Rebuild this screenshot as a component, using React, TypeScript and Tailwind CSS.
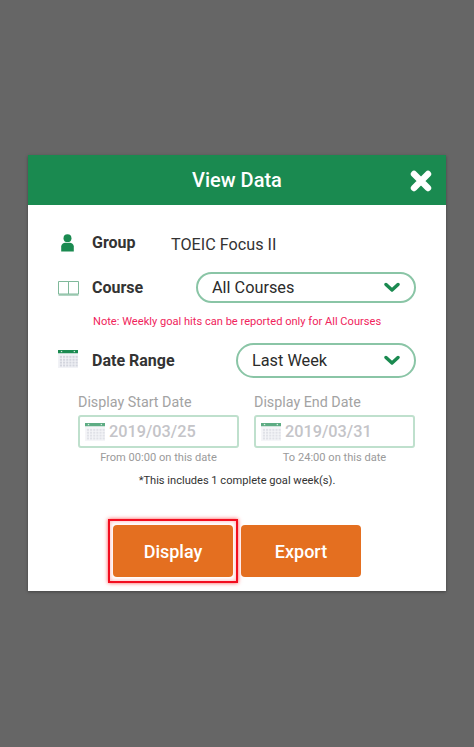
function CalendarIcon({ className }: { className: string }) {
  const cells = [];
  for (let r = 0; r < 4; r++) {
    for (let c = 0; c < 6; c++) {
      cells.push(<rect key={`${r}-${c}`} x={2 + c * 3.3} y={6.5 + r * 3.2} width="2.2" height="2.2" fill="#d3d5de" />);
    }
  }
  return (
    <svg viewBox="0 0 21 20" preserveAspectRatio="none" className={className}>
      <rect x="0" y="3" width="21" height="17" fill="#f1f2f6" />
      <rect x="0" y="0" width="21" height="3.6" fill="#1a8a50" />
      <rect x="3" y="1" width="1.4" height="1.4" fill="#cfe8da" />
      <rect x="16.5" y="1" width="1.4" height="1.4" fill="#cfe8da" />
      {cells}
    </svg>
  );
}

function Chevron() {
  return (
    <svg viewBox="0 0 16 11" className="h-[11px] w-[16px]">
      <path d="M2 2.5 L8 8 L14 2.5" fill="none" stroke="#1a8a50" strokeWidth="3.4" strokeLinecap="round" strokeLinejoin="round" />
    </svg>
  );
}

function Select({ label, className }: { label: string; className: string }) {
  return (
    <div className={`flex items-center justify-between rounded-full border-2 border-[#8ac5a6] bg-white pl-[14px] pr-[14px] text-[16.3px] text-[#2b2b2b] ${className}`}>
      <span className="pt-[2px]">{label}</span>
      <Chevron />
    </div>
  );
}

function DateField({ label, value, hint }: { label: string; value: string; hint: string }) {
  return (
    <div className="w-[161px]">
      <div className="text-[14.3px] leading-[20px] text-[#a3a3a3]">{label}</div>
      <div className="mt-[3px] flex h-[33px] items-center rounded-[3px] border-2 border-[#bfe0cd] pl-[5px]">
        <CalendarIcon className="h-[18px] w-[20px] opacity-70" />
        <span className="ml-[4px] pt-[2px] text-[16.3px] font-medium text-[#c4c4c8]">{value}</span>
      </div>
      <div className="mt-[2px] text-center text-[11.1px] leading-[16px] text-[#9a9a9a]">{hint}</div>
    </div>
  );
}

export default function App() {
  return (
    <div className="h-[747px] bg-[#666666] pt-[155px] font-['Roboto',sans-serif]">
      <div className="mx-auto h-[436px] w-[418px] bg-white shadow-[0_1px_3px_rgba(0,0,0,0.35)]">
        <div className="relative flex h-[50px] items-center justify-center bg-[#1a8a50]">
          <span className="text-[20px] font-medium text-white">View Data</span>
          <svg viewBox="0 0 22 22" className="absolute right-[14px] top-[15px] h-[22px] w-[22px]">
            <path d="M4 4 L18 18 M18 4 L4 18" stroke="#ffffff" strokeWidth="6.4" strokeLinecap="round" />
          </svg>
        </div>

        <div className="flow-root px-[30px]">
          <div className="mt-[27px] flex h-[24px] items-center">
            <svg viewBox="0 0 16 20" className="ml-[2px] mb-[3px] h-[18px] w-[15px]">
              <circle cx="8" cy="4.6" r="4.4" fill="#1a8a50" />
              <path d="M1 19.5 V14 C1 11 3.5 9.6 5.5 9.6 H10.5 C12.5 9.6 15 11 15 14 V19.5 Z" fill="#1a8a50" />
            </svg>
            <span className="ml-[17px] w-[79px] pb-[2px] text-[16px] font-bold text-[#333333]">Group</span>
            <span className="pt-[2px] text-[16.2px] text-[#333333]">TOEIC Focus II</span>
          </div>

          <div className="mt-[16px] flex h-[31px] items-center">
            <svg viewBox="0 0 21 16" fill="none" className="h-[16px] w-[21px]">
              <path d="M.5 1.5 H10.5 V14 H.5 Z M10.5 1.5 H20.5 V14 H10.5 Z" stroke="#7fb99a" strokeWidth="1" />
              <path d="M.5 15 H20.5" stroke="#7fb99a" strokeWidth="1.2" />
            </svg>
            <span className="ml-[13px] text-[16px] font-bold text-[#333333]">Course</span>
            <Select label="All Courses" className="ml-auto h-[31px] w-[220px]" />
          </div>

          <div className="ml-[35px] mt-[11px] text-[11.1px] leading-[16px] text-[#f0245c]">
            Note: Weekly goal hits can be reported only for All Courses
          </div>

          <div className="mt-[13px] flex h-[35px] items-center">
            <CalendarIcon className="mb-[4px] h-[18px] w-[20px]" />
            <span className="ml-[14px] text-[16px] font-bold text-[#333333]">Date Range</span>
            <Select label="Last Week" className="ml-auto h-[35px] w-[180px]" />
          </div>

          <div className="ml-[20px] mt-[14px] flex gap-[15px]">
            <DateField label="Display Start Date" value="2019/03/25" hint="From 00:00 on this date" />
            <DateField label="Display End Date" value="2019/03/31" hint="To 24:00 on this date" />
          </div>

          <div className="mt-[7px] text-center text-[11.1px] leading-[16px] text-[#333333]">
            *This includes 1 complete goal week(s).
          </div>

          <div className="ml-[50px] mt-[30px] flex items-center gap-[3px]">
            <div className="border-2 border-[#f20d1f] px-[3px] py-[4px] shadow-[0_0_4px_rgba(255,0,0,0.7),inset_0_0_4px_rgba(255,0,0,0.35)]">
              <button className="block h-[52px] w-[120px] rounded-[4px] bg-[#e46f20] text-[18px] font-medium text-white">Display</button>
            </div>
            <button className="h-[52px] w-[120px] rounded-[4px] bg-[#e46f20] text-[18px] font-medium text-white">Export</button>
          </div>
        </div>
      </div>
    </div>
  );
}
